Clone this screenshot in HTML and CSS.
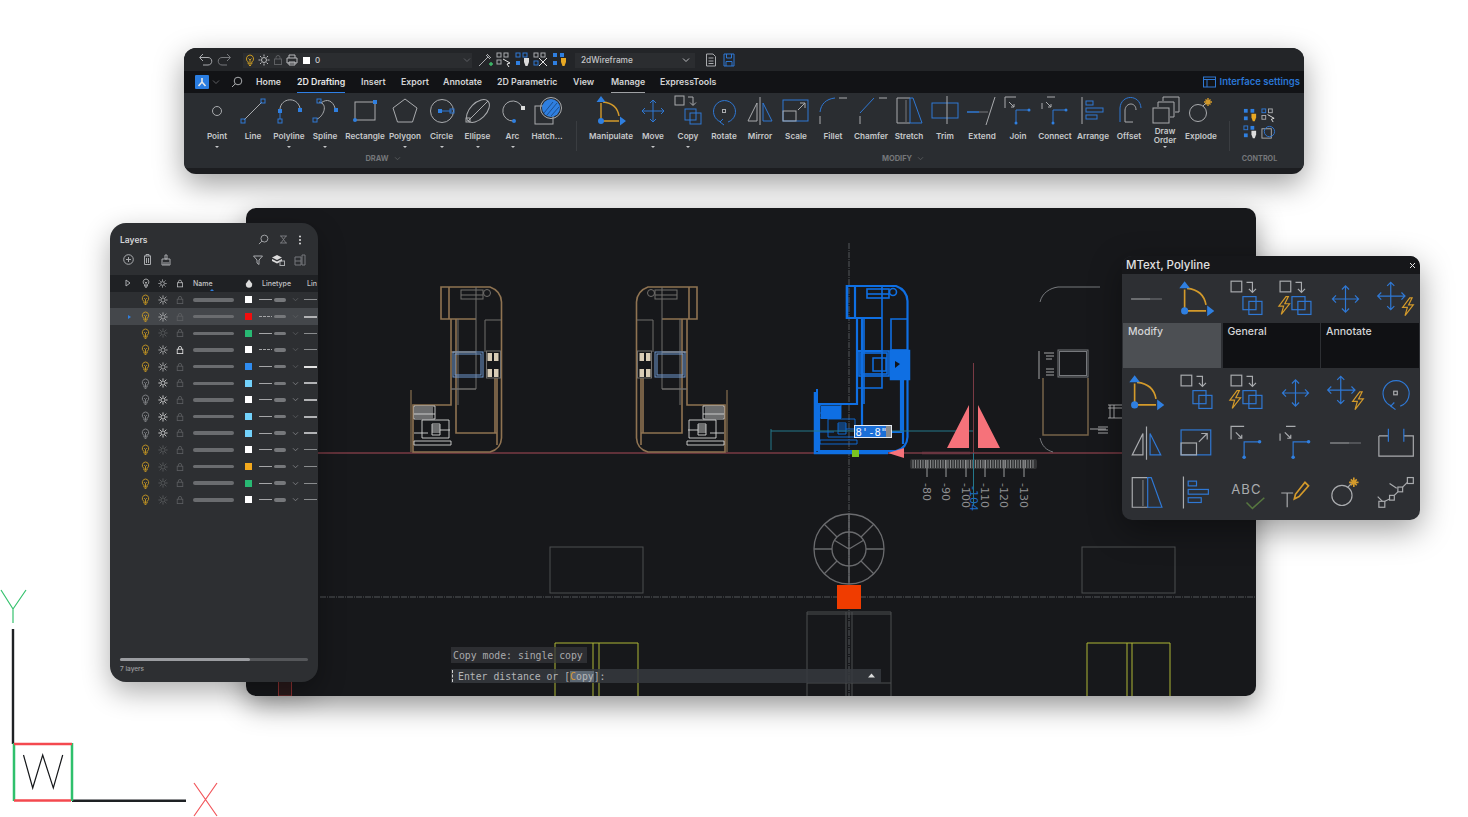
FILE: index.html
```html
<!DOCTYPE html>
<html lang="en">
<head>
<meta charset="utf-8">
<title>CAD interface</title>
<link rel="stylesheet" href="styles.css">
</head>
<body>
<svg class="sprite" aria-hidden="true">
  <defs>
    <symbol id="i-point" viewBox="0 0 36 32"><circle class="g" cx="18" cy="16" r="4.5"/></symbol>
    <symbol id="i-line" viewBox="0 0 36 32"><path class="g" d="M9 25L27 7"/><rect class="b" x="6" y="24" width="4" height="4"/><rect class="b" x="26" y="4" width="4" height="4"/></symbol>
    <symbol id="i-polyline" viewBox="0 0 36 32"><path class="g" d="M9 14C10 3 26 1 29 13"/><path class="b" d="M9 16V24"/><rect class="bf" x="7" y="14" width="4" height="4"/><rect class="b" x="7" y="24" width="4" height="4"/><rect class="bf" x="27" y="13" width="4" height="4"/></symbol>
    <symbol id="i-spline" viewBox="0 0 36 32"><path class="g" d="M12 7C22 9 16 22 10 24M14 8C20 3 26 6 28 13"/><rect class="b" x="10" y="4" width="4" height="4"/><rect class="b" x="6" y="23" width="4" height="4"/><rect class="bf" x="27" y="13" width="4" height="4"/></symbol>
    <symbol id="i-rectangle" viewBox="0 0 36 32"><rect class="g" x="8" y="7" width="20" height="18"/><circle class="bf" cx="8" cy="25" r="2"/><rect class="bf" x="26" y="5" width="4" height="4"/></symbol>
    <symbol id="i-polygon" viewBox="0 0 36 32"><path class="g" d="M18 4L30 13L25.5 27H10.5L6 13Z"/></symbol>
    <symbol id="i-circle" viewBox="0 0 36 32"><circle class="g" cx="18" cy="16" r="11.500"/><rect class="bf" x="14" y="14" width="4" height="4"/><path class="b" d="M18 16H28"/><rect class="b" x="26" y="14" width="4" height="4"/></symbol>
    <symbol id="i-ellipse" viewBox="0 0 36 32"><ellipse class="g" cx="18" cy="16" rx="14" ry="8" transform="rotate(-45 18 16)"/><path class="g" d="M8 26L28 6"/><rect class="g" x="6" y="23" width="4" height="4"/></symbol>
    <symbol id="i-arc" viewBox="0 0 36 32"><path class="g" d="M27 12A10 10 0 1 0 18 26"/><circle class="bf" cx="19" cy="26" r="2"/><rect class="wf" x="26" y="11" width="4" height="4"/></symbol>
    <symbol id="i-hatch" viewBox="0 0 36 32"><rect class="g" x="6" y="11" width="18" height="18"/><circle class="bf" cx="22" cy="13" r="9"/><circle class="g" cx="22" cy="13" r="10.500"/><path class="dk" d="M15 18L24 7M18 20L28 8M22 21L30 12"/></symbol>
    <symbol id="i-manipulate" viewBox="0 0 36 32"><path class="y th" d="M8 8V26H26M10 7C21 8 25 15 26 21"/><path class="bf" d="M8 1L12.500 7H3.500ZM33 26L27 21.500V30.500Z"/><circle class="bf" cx="8" cy="26" r="3"/></symbol>
    <symbol id="i-move" viewBox="0 0 36 32"><path class="b" d="M18 5V27M7 16H29M15 8L18 5L21 8M15 24L18 27L21 24M10 13L7 16L10 19M26 13L29 16L26 19"/></symbol>
    <symbol id="i-moveflash" viewBox="0 0 36 32"><path class="b" d="M14 2V25M3 13.500H26M11 5L14 2L17 5M11 22L14 25L17 22M6 10.500L3 13.500L6 16.500M23 10.500L26 13.500L23 16.500"/><path class="y" d="M30 15L24 23H28L26 30L33 21H29L32 15Z"/></symbol>
    <symbol id="i-copy" viewBox="0 0 36 32"><rect class="g" x="5" y="1" width="9" height="9"/><path class="g" d="M18 2H23V10M20 7.500L23 10.500L26 7.500"/><rect class="b" x="15" y="14" width="11" height="11"/><rect class="b" x="20" y="18" width="11" height="11"/></symbol>
    <symbol id="i-copyflash" viewBox="0 0 36 32"><rect class="g" x="5" y="1" width="9" height="9"/><path class="g" d="M18 2H23V10M20 7.500L23 10.500L26 7.500"/><rect class="b" x="15" y="14" width="11" height="11"/><rect class="b" x="20" y="18" width="11" height="11"/><path class="y" d="M10 14L4 22H8L6 29L13 20H9L12 14Z"/></symbol>
    <symbol id="i-rotate" viewBox="0 0 36 32"><path class="b" d="M15 27A11 11 0 1 1 22 27M17 24L14 27L18 30"/><rect class="g" x="16.500" y="14.500" width="3" height="3"/></symbol>
    <symbol id="i-mirror" viewBox="0 0 36 32"><path class="g" d="M18 2V30M15 8L6 26H15Z"/><path class="b" d="M21 8V26H30Z"/></symbol>
    <symbol id="i-scale" viewBox="0 0 36 32"><rect class="b" x="5" y="5" width="25" height="21"/><rect class="g" x="5" y="16" width="13" height="10"/><path class="g" d="M20 15L27 8M22 8H27V13"/></symbol>
    <symbol id="i-fillet" viewBox="0 0 36 32"><path class="b" d="M5 17C6 9 11 4 20 3"/><path class="g" d="M24 3H32M5 21V29"/></symbol>
    <symbol id="i-chamfer" viewBox="0 0 36 32"><path class="b" d="M7 18L21 3"/><path class="g" d="M26 3H34M7 21V29"/></symbol>
    <symbol id="i-stretch" viewBox="0 0 36 32"><path class="g" d="M19 3H6V28H19"/><path class="gd" d="M15 5V27"/><path class="b" d="M19 3H22L31 28H19Z"/></symbol>
    <symbol id="i-trim" viewBox="0 0 36 32"><rect class="b" x="5" y="8" width="26" height="15"/><path class="g" d="M20 1V29"/></symbol>
    <symbol id="i-extend" viewBox="0 0 36 32"><path class="g" d="M31 2L22 30"/><path class="b th" d="M3 17H15"/><path class="gd" d="M15 17H24"/></symbol>
    <symbol id="i-join" viewBox="0 0 36 32"><path class="g" d="M5 13V2H16M9 7L14 12M11 12H14V9"/><path class="b" d="M16 29V15H30"/><circle class="bf" cx="16" cy="28" r="1.500"/><circle class="bf" cx="29" cy="15" r="1.500"/></symbol>
    <symbol id="i-connect" viewBox="0 0 36 32"><path class="g" d="M5 8V14M10 2H18M9 7L14 12M11 12H14V9"/><path class="b" d="M16 29V15H30"/><circle class="bf" cx="16" cy="28" r="1.500"/><circle class="bf" cx="29" cy="15" r="1.500"/></symbol>
    <symbol id="i-arrange" viewBox="0 0 36 32"><path class="g" d="M7 2V29"/><rect class="b" x="11" y="6" width="7" height="4"/><rect class="b" x="11" y="13" width="17" height="4"/><rect class="b" x="11" y="20" width="11" height="4"/></symbol>
    <symbol id="i-offset" viewBox="0 0 36 32"><path class="b" d="M9 27V13C10 -1 29 -1 30 13"/><path class="g" d="M14 27V15C15 7 25 7 25 15M14 27H22"/></symbol>
    <symbol id="i-draworder" viewBox="0 0 36 32"><rect class="g" x="6" y="13" width="16" height="15"/><path class="g" d="M11 12V7H27V22H23M16 6V2H32V17H28"/></symbol>
    <symbol id="i-explode" viewBox="0 0 36 32"><circle class="g" cx="15" cy="18" r="8.500"/><path class="g" d="M20 11L23 8"/><path class="y th" d="M25 3V11M21 7H29M22.500 4.500L27.500 9.500M27.500 4.500L22.500 9.500"/></symbol>
    <symbol id="i-shortline" viewBox="0 0 36 32"><path class="g" d="M5 16H21"/><path class="gd" d="M21 16H31"/></symbol>
    <symbol id="i-bracket" viewBox="0 0 36 32"><path class="g" d="M4 10V27H33V10H25M12 10H4"/><path class="b" d="M12 4V15M25 4V15"/></symbol>
    <symbol id="i-spell" viewBox="0 0 36 32"><text class="spell" x="18" y="17" text-anchor="middle">ABC</text><path class="ok" d="M18 24L23 29L33 20"/></symbol>
    <symbol id="i-textedit" viewBox="0 0 36 32"><path class="g" d="M6 16H16M11 16V28"/><path class="y th" d="M18 17L26 7L29 10L21 19L17 21Z"/></symbol>
    <symbol id="i-array" viewBox="0 0 36 32"><rect class="g" x="4" y="23" width="5" height="5"/><rect class="g" x="13" y="18" width="4" height="4"/><rect class="g" x="20" y="11" width="4" height="4"/><rect class="g" x="28" y="3" width="5" height="5"/><path class="g" d="M9 23L13 21M17 18L20 15M24 11L28 7M13 8L19 12M3 19L7 23"/></symbol>
    <symbol id="i-bulb" viewBox="0 0 10 12"><path class="cur" d="M5 1A3.800 3.800 0 0 0 3.200 8V10H6.800V8A3.800 3.800 0 0 0 5 1ZM4 11.500H6M3.500 4.500L5 6L6.500 4.500M5 6V10"/></symbol>
    <symbol id="i-sun" viewBox="0 0 12 12"><circle class="cur" cx="6" cy="6" r="2.500"/><path class="cur" d="M6 .5V2.500M6 9.500V11.500M.5 6H2.500M9.500 6H11.500M2 2L3.500 3.500M8.500 8.500L10 10M10 2L8.500 3.500M3.500 8.500L2 10"/></symbol>
    <symbol id="i-lock" viewBox="0 0 10 12"><rect class="cur" x="1.500" y="5" width="7" height="5.500"/><path class="cur" d="M3 5V3.500A2 2 0 0 1 7 3.500V5"/></symbol>
    <symbol id="i-chev" viewBox="0 0 8 6"><path class="cur" d="M1 1.500L4 4.500L7 1.500"/></symbol>
  </defs>
</svg>

<section class="ribbon-window">
  <div class="quick-bar">
    <svg class="q-icon" width="16" height="14" viewBox="0 0 16 14"><path class="g" d="M5 1L1.500 4.500L5 8M2 4.500H10C15 4.500 15 12 10 12H5"/></svg>
    <svg class="q-icon" width="16" height="14" viewBox="0 0 16 14"><path class="gd" d="M11 1L14.500 4.500L11 8M14 4.500H6C1 4.500 1 12 6 12H11"/></svg>
    <div class="layer-select">
      <svg class="tint-y" width="10" height="12"><use href="#i-bulb"/></svg>
      <svg class="tint-m" width="12" height="12"><use href="#i-sun"/></svg>
      <svg class="tint-d" width="10" height="12"><use href="#i-lock"/></svg>
      <svg class="tint-m" width="12" height="12" viewBox="0 0 12 12"><path class="cur" d="M3 4V1H9V4M1 4H11V9H1ZM3 8H9V11H3Z"/></svg>
      <span class="swatch-big"></span>
      <span class="layer-zero">0</span>
      <svg class="tint-d chev-end" width="8" height="6"><use href="#i-chev"/></svg>
    </div>
    <div class="q-tools">
      <svg width="16" height="16" viewBox="0 0 16 16"><path class="g" d="M2 14L11 5M9 3L13 7M10 2L14 6"/><path class="okf" d="M12 12H16M14 10V14"/></svg>
      <svg width="16" height="16" viewBox="0 0 16 16"><rect class="g" x="1" y="1" width="4" height="4"/><rect class="g" x="8" y="1" width="4" height="4"/><rect class="g" x="1" y="8" width="4" height="4"/><path class="wh" d="M7 7L14 11L11 12L13 15"/></svg>
      <svg width="16" height="16" viewBox="0 0 16 16"><rect class="b" x="1" y="1" width="4" height="4"/><rect class="b" x="8" y="1" width="4" height="4"/><rect class="bf" x="1" y="9" width="4" height="4"/><path class="wf" d="M9 6H14V10L12.500 14H10.500L9 10Z"/></svg>
      <svg width="16" height="16" viewBox="0 0 16 16"><rect class="g" x="1" y="1" width="4" height="4"/><rect class="g" x="8" y="1" width="4" height="4"/><rect class="b" x="1" y="9" width="4" height="4"/><path class="wh" d="M6 6L14 14M14 6L6 14"/></svg>
      <svg width="16" height="16" viewBox="0 0 16 16"><rect class="bf" x="1" y="1" width="4" height="4"/><rect class="bf" x="8" y="1" width="4" height="4"/><rect class="bf" x="1" y="9" width="4" height="4"/><path class="yf" d="M9 6H14V10L12.500 14H10.500L9 10Z"/></svg>
    </div>
    <div class="view-select"><span>2dWireframe</span><svg class="tint-m" width="8" height="6"><use href="#i-chev"/></svg></div>
    <div class="q-docs">
      <svg width="12" height="14" viewBox="0 0 12 14"><path class="g" d="M1.500 1H8L10.500 3.500V13H1.500ZM3.500 5H8.500M3.500 8H8.500M3.500 10.500H8.500"/></svg>
      <svg width="12" height="14" viewBox="0 0 12 14"><path class="b" d="M1 1H11V13H1ZM3.500 1V5H8.500V1M3 13V8.500H9V13"/></svg>
    </div>
  </div>

  <nav class="tab-bar">
    <span class="logo"><svg width="10" height="10" viewBox="0 0 10 10"><path class="wh wide" d="M5 1V5M5 5L1.500 9M5 5L8.500 9"/></svg></span>
    <svg class="tint-d tab-chev" width="8" height="6"><use href="#i-chev"/></svg>
    <svg class="tab-search" width="12" height="12" viewBox="0 0 12 12"><circle class="g" cx="7" cy="5" r="3.800"/><path class="g" d="M4.300 7.800L1 11"/></svg>
    <a class="tab t-home">Home</a>
    <a class="tab t-active">2D Drafting</a>
    <a class="tab t-insert">Insert</a>
    <a class="tab t-export">Export</a>
    <a class="tab t-annot">Annotate</a>
    <a class="tab t-param">2D Parametric</a>
    <a class="tab t-view">View</a>
    <a class="tab t-manage">Manage</a>
    <a class="tab t-express">ExpressTools</a>
    <span class="iface">
      <svg width="13" height="12" viewBox="0 0 13 12"><rect class="b" x=".5" y="1" width="12" height="10"/><path class="b" d="M.5 3.500H12.500M4 3.500V11"/></svg>
      Interface settings
    </span>
  </nav>

  <div class="ribbon">
    <div class="group">
      <div class="tools tools-draw">
        <div class="tool"><svg class="ti"><use href="#i-point"/></svg><span class="tl">Point</span><i class="drop"></i></div>
        <div class="tool"><svg class="ti"><use href="#i-line"/></svg><span class="tl">Line</span></div>
        <div class="tool"><svg class="ti"><use href="#i-polyline"/></svg><span class="tl">Polyline</span><i class="drop"></i></div>
        <div class="tool"><svg class="ti"><use href="#i-spline"/></svg><span class="tl">Spline</span><i class="drop"></i></div>
        <div class="tool"><svg class="ti"><use href="#i-rectangle"/></svg><span class="tl">Rectangle</span></div>
        <div class="tool"><svg class="ti"><use href="#i-polygon"/></svg><span class="tl">Polygon</span><i class="drop"></i></div>
        <div class="tool"><svg class="ti"><use href="#i-circle"/></svg><span class="tl">Circle</span><i class="drop"></i></div>
        <div class="tool"><svg class="ti"><use href="#i-ellipse"/></svg><span class="tl">Ellipse</span><i class="drop"></i></div>
        <div class="tool"><svg class="ti"><use href="#i-arc"/></svg><span class="tl">Arc</span><i class="drop"></i></div>
        <div class="tool"><svg class="ti"><use href="#i-hatch"/></svg><span class="tl">Hatch...</span></div>
      </div>
      <div class="group-label label-draw">DRAW <svg class="tint-d" width="7" height="5"><use href="#i-chev"/></svg></div>
    </div>
    <div class="group group-sep">
      <div class="tools tools-modify">
        <div class="tool"><svg class="ti"><use href="#i-manipulate"/></svg><span class="tl">Manipulate</span></div>
        <div class="tool"><svg class="ti"><use href="#i-move"/></svg><span class="tl">Move</span><i class="drop"></i></div>
        <div class="tool"><svg class="ti"><use href="#i-copy"/></svg><span class="tl">Copy</span><i class="drop"></i></div>
        <div class="tool"><svg class="ti"><use href="#i-rotate"/></svg><span class="tl">Rotate</span></div>
        <div class="tool"><svg class="ti"><use href="#i-mirror"/></svg><span class="tl">Mirror</span></div>
        <div class="tool"><svg class="ti"><use href="#i-scale"/></svg><span class="tl">Scale</span></div>
        <div class="tool"><svg class="ti"><use href="#i-fillet"/></svg><span class="tl">Fillet</span></div>
        <div class="tool"><svg class="ti"><use href="#i-chamfer"/></svg><span class="tl">Chamfer</span></div>
        <div class="tool"><svg class="ti"><use href="#i-stretch"/></svg><span class="tl">Stretch</span></div>
        <div class="tool"><svg class="ti"><use href="#i-trim"/></svg><span class="tl">Trim</span></div>
        <div class="tool"><svg class="ti"><use href="#i-extend"/></svg><span class="tl">Extend</span></div>
        <div class="tool"><svg class="ti"><use href="#i-join"/></svg><span class="tl">Join</span></div>
        <div class="tool"><svg class="ti"><use href="#i-connect"/></svg><span class="tl">Connect</span></div>
        <div class="tool"><svg class="ti"><use href="#i-arrange"/></svg><span class="tl">Arrange</span></div>
        <div class="tool"><svg class="ti"><use href="#i-offset"/></svg><span class="tl">Offset</span></div>
        <div class="tool"><svg class="ti"><use href="#i-draworder"/></svg><span class="tl">Draw<br>Order</span><i class="drop"></i></div>
        <div class="tool"><svg class="ti"><use href="#i-explode"/></svg><span class="tl">Explode</span></div>
      </div>
      <div class="group-label">MODIFY <svg class="tint-d" width="7" height="5"><use href="#i-chev"/></svg></div>
    </div>
    <div class="group group-control">
      <div class="control-grid">
        <svg width="15" height="15" viewBox="0 0 16 16"><rect class="bf" x="1" y="1" width="4" height="4"/><rect class="bf" x="8" y="1" width="4" height="4"/><rect class="bf" x="1" y="9" width="4" height="4"/><path class="yf" d="M9 6H14V10L12.500 14H10.500L9 10Z"/></svg>
        <svg width="15" height="15" viewBox="0 0 16 16"><rect class="b" x="1" y="1" width="4" height="4"/><rect class="g" x="8" y="1" width="4" height="4"/><rect class="g" x="1" y="8" width="4" height="4"/><path class="wh" d="M7 7L14 11L11 12L13 15"/></svg>
        <svg width="15" height="15" viewBox="0 0 16 16"><rect class="b" x="1" y="1" width="4" height="4"/><rect class="bf" x="8" y="1" width="4" height="4"/><rect class="bf" x="1" y="9" width="4" height="4"/><path class="wf" d="M9 6H14V10L12.500 14H10.500L9 10Z"/></svg>
        <svg width="15" height="15" viewBox="0 0 16 16"><rect class="g" x="1" y="4" width="10" height="10"/><circle class="b" cx="9" cy="7" r="5.500"/></svg>
      </div>
      <div class="group-label label-control">CONTROL</div>
    </div>
  </div>
</section>

<main class="canvas">
  <svg class="drawing" viewBox="246 208 1010 488" width="1010" height="488">
    <defs>
      <g id="unit">
        <path class="u-a" d="M441 287H490Q501 291 501.500 302V438Q501 449 490 452H413V405H451V319H441ZM456 319V433H497M497 378V445M441 319H476M449 287V319M451 352H476M495 378V433"/>
        <path class="u-p" d="M411 390V452"/>
        <path class="u-b" d="M476 287V389H451M458 319V405M451 389H476M485 352V320H501"/>
        <rect class="u-b" x="461" y="290" width="22" height="9"/>
        <path class="u-b" d="M461 295H483"/>
        <circle class="u-b" cx="487" cy="293" r="3.500"/>
        <rect class="u-c" x="453" y="352" width="30" height="25"/>
        <rect class="u-c" x="455" y="354" width="26" height="21"/>
        <rect class="u-b" x="486.500" y="351" width="14" height="27"/>
        <rect class="u-d" x="487.500" y="353" width="4.500" height="8"/>
        <rect class="u-d" x="494" y="353" width="4.500" height="8"/>
        <rect class="u-d" x="487.500" y="369" width="4.500" height="8"/>
        <rect class="u-d" x="494" y="369" width="4.500" height="8"/>
        <path class="u-e" d="M414 406H435V419H414ZM422 420H449V438H422ZM414 441H451V445H414ZM414 433H428M432 424H440V435H432ZM440 430H450M416 407V418M418 407V418M420 407V418M422 407V418M424 407V418M426 407V418M428 407V418M430 407V418M432 407V418M414 414H435M432 426H440M432 428H440M432 430H440M432 432H440"/>
      </g>
    </defs>

    <path class="axis-red" d="M318 453H1122"/>
    <path class="axis-dash" d="M849 243V696M320 597H1256"/>

    <use href="#unit" class="unit-tan"/>
    <use href="#unit" class="unit-tan" transform="translate(1138 0) scale(-1 1)"/>
    <use href="#unit" class="unit-blue" transform="translate(406 -1)"/>
    <path class="blue-thick" d="M815 392V453H888M847 285V319M891 351H909V379H891Z"/>
    <rect class="blue-fill" x="892" y="351" width="16" height="27"/>
    <path class="notch" d="M895 361L900 364L895 368Z"/>
    <rect class="blue-inner" x="873" y="358" width="13" height="13"/>
    <rect class="blue-fill" x="821" y="406" width="20" height="13"/>

    <path class="far-g" d="M1040 302C1042 293 1050 288 1058 287M1058 287H1100M1040 438C1042 446 1046 450 1053 452"/>
    <rect class="far-g" x="1058" y="350" width="30" height="27"/>
    <rect class="far-g" x="1059.500" y="351.500" width="27" height="24"/>
    <path class="far-b" d="M1043 378V435H1088V378"/>
    <path class="far-w" d="M1039 351V379M1044 353H1054M1046 356H1054M1046 359H1052M1046 369H1054M1046 372H1054M1046 375H1054M1108 405H1122M1108 408H1122M1110 405V418M1114 405V418M1108 418H1122M1090 429H1106M1098 427H1108M1098 430H1108M1098 433H1108"/>

    <rect class="ruler-band" x="910" y="459" width="127" height="10" rx="2"/>
    <path class="ruler-ticks" d="M913 460V468M915.500 460V468M918 460V468M920.500 460V468M923 460V468M925.500 460V468M928 460V468M930.500 460V468M933 460V468M935.500 460V468M938 460V468M940.500 460V468M943 460V468M945.500 460V468M948 460V468M950.500 460V468M953 460V468M955.500 460V468M958 460V468M960.500 460V468M963 460V468M965.500 460V468M968 460V468M970.500 460V468M973 460V468M975.500 460V468M978 460V468M980.500 460V468M983 460V468M985.500 460V468M988 460V468M990.500 460V468M993 460V468M995.500 460V468M998 460V468M1000.500 460V468M1003 460V468M1005.500 460V468M1008 460V468M1010.500 460V468M1013 460V468M1015.500 460V468M1018 460V468M1020.500 460V468M1023 460V468M1025.500 460V468M1028 460V468M1030.500 460V468M1033 460V468"/>
    <path class="ruler-major" d="M927 460V477M946 460V477M966 460V477M985 460V477M1004 460V477M1024 460V477"/>
    <text class="rt" transform="translate(923 483) rotate(90)">-80</text>
    <text class="rt" transform="translate(942 483) rotate(90)">-90</text>
    <text class="rt" transform="translate(962 483) rotate(90)">-100</text>
    <text class="rt" transform="translate(981 483) rotate(90)">-110</text>
    <text class="rt" transform="translate(1000 483) rotate(90)">-120</text>
    <text class="rt" transform="translate(1020 483) rotate(90)">-130</text>
    <text class="rt rt-b" transform="translate(970 486) rotate(90)">-104</text>

    <path class="teal" d="M771 431H974M771 429V450M973.500 453V505"/>
    <path class="cursor-v" d="M973.500 363V453"/>
    <path class="tri" d="M969 405V448H947ZM978 405V448H1000ZM888 453L904 448V458Z"/>
    <path class="axis-dark" d="M922 453H970"/>
    <rect class="grip" x="852" y="450" width="7" height="7"/>
    <rect class="dim-box" x="854.500" y="425.500" width="37" height="12"/>
    <rect class="dim-end" x="886" y="426" width="5" height="11"/>
    <text class="dim-text" x="855.500" y="435.500">8'-8"</text>

    <rect class="gray-rect" x="550" y="547" width="93" height="46"/>
    <rect class="gray-rect" x="1082" y="547" width="93" height="46"/>
    <g class="wheel">
      <circle cx="849" cy="549" r="35"/>
      <circle cx="849" cy="549" r="17"/>
      <path d="M849 514V584M849 549L834 540M849 549L864 540M814 549H832M866 549H884M824 524L837 537M874 524L861 537M824 574L837 561M874 574L861 561"/>
    </g>
    <rect class="orange" x="837" y="585" width="24" height="24"/>
    <path class="gray-rect" d="M807 696V612H891V696M807 683H891M846 612V696M852 612V696M807 614H891"/>
    <path class="olive" d="M555 696V643H638V696M593 643V696M599 643V696M1087 696V643H1170V696M1127 643V696M1132 643V696"/>
    <rect class="stub" x="278.500" y="680" width="13" height="16"/>
  </svg>

  <div class="cmd cmd-history">Copy mode: single copy</div>
  <div class="cmd cmd-input">
    <span class="cmd-grip"></span><span>Enter distance or [<span class="cmd-hl"><span class="cmd-key">C</span>opy</span>]:</span>
    <svg class="cmd-up" width="7" height="5" viewBox="0 0 7 5"><path class="wf" d="M3.500 .5L7 4.500H0Z"/></svg>
  </div>
</main>

<aside class="layers">
  <header class="layers-head">
    <span>Layers</span>
    <span class="head-tools">
      <svg width="11" height="11" viewBox="0 0 12 12"><circle class="g" cx="7" cy="5" r="3.800"/><path class="g" d="M4.300 7.800L1 11"/></svg>
      <svg width="9" height="9" viewBox="0 0 9 9"><path class="gd" d="M2 1L7 8M7 1L2 8M1 1H8M1 8H8"/></svg>
      <svg width="4" height="10" viewBox="0 0 4 10"><circle class="wf" cx="2" cy="1.500" r="1"/><circle class="wf" cx="2" cy="5" r="1"/><circle class="wf" cx="2" cy="8.500" r="1"/></svg>
    </span>
  </header>
  <div class="layers-tools">
    <svg width="11" height="11" viewBox="0 0 11 11"><circle class="g" cx="5.500" cy="5.500" r="4.800"/><path class="g" d="M5.500 3V8M3 5.500H8"/></svg>
    <svg width="9" height="11" viewBox="0 0 9 11"><path class="g" d="M1 2H8M3 2V.5H6V2M1.500 2V10.500H7.500V2M3.500 4V9M5.500 4V9"/></svg>
    <svg width="10" height="12" viewBox="0 0 10 12"><path class="g" d="M4 1H6V5H4ZM1 5H9V11H1ZM3 8V11M5 8V11M7 8V11"/></svg>
    <span class="lt-gap"></span>
    <svg width="10" height="10" viewBox="0 0 10 10"><path class="g" d="M.5 1H9.500L6 5V9.500L4 8V5Z"/></svg>
    <svg width="13" height="12" viewBox="0 0 13 12"><path class="wf" d="M5 1L10 3.500L5 6L0 3.500ZM5 7.500L10 5V7L5 9.500L0 7V5Z"/><rect class="g" x="8" y="7" width="4.500" height="4.500"/></svg>
    <svg width="12" height="12" viewBox="0 0 12 12"><path class="gd" d="M1 3H7V11H1ZM8 1H11V11H8ZM1 7H7"/></svg>
  </div>

  <div class="layer-row layer-header">
    <span class="c-caret"><svg width="6" height="8" viewBox="0 0 6 8"><path class="g" d="M1 1L5 4L1 7Z"/></svg></span>
    <span class="c-ic tint-l"><svg width="8" height="10"><use href="#i-bulb"/></svg></span>
    <span class="c-ic tint-l"><svg width="9" height="9"><use href="#i-sun"/></svg></span>
    <span class="c-ic tint-l"><svg width="8" height="9"><use href="#i-lock"/></svg></span>
    <span class="c-name-h">Name<i class="sort"></i></span>
    <span class="c-ic"><svg width="8" height="9" viewBox="0 0 8 9"><path class="wf" d="M4 .5L7 4.500A3.200 3.200 0 1 1 1 4.500Z"/></svg></span>
    <span class="c-type-h">Linetype</span>
    <span class="c-lin-h">Lin</span>
  </div>

  <div class="layer-row"><span class="c-caret"></span><span class="c-ic tint-y"><svg width="9" height="11"><use href="#i-bulb"/></svg></span><span class="c-ic tint-m"><svg width="10" height="10"><use href="#i-sun"/></svg></span><span class="c-ic tint-d"><svg width="8" height="10"><use href="#i-lock"/></svg></span><span class="c-name"><i class="bar"></i></span><span class="c-ic"><i class="sw sw-white"></i></span><span class="c-type"><i class="ln"></i><i class="pill"></i></span><span class="c-ic tint-d"><svg width="7" height="5"><use href="#i-chev"/></svg></span><span class="c-w"><i class="wt"></i></span></div>
  <div class="layer-row row-on"><span class="c-caret"><i class="cur-tri"></i></span><span class="c-ic tint-y"><svg width="9" height="11"><use href="#i-bulb"/></svg></span><span class="c-ic tint-m"><svg width="10" height="10"><use href="#i-sun"/></svg></span><span class="c-ic tint-d"><svg width="8" height="10"><use href="#i-lock"/></svg></span><span class="c-name"><i class="bar"></i></span><span class="c-ic"><i class="sw sw-red"></i></span><span class="c-type"><i class="ln ln-dash"></i><i class="pill"></i></span><span class="c-ic tint-d"><svg width="7" height="5"><use href="#i-chev"/></svg></span><span class="c-w"><i class="wt wt-b"></i></span></div>
  <div class="layer-row"><span class="c-caret"></span><span class="c-ic tint-y"><svg width="9" height="11"><use href="#i-bulb"/></svg></span><span class="c-ic tint-d"><svg width="10" height="10"><use href="#i-sun"/></svg></span><span class="c-ic tint-d"><svg width="8" height="10"><use href="#i-lock"/></svg></span><span class="c-name"><i class="bar"></i></span><span class="c-ic"><i class="sw sw-green"></i></span><span class="c-type"><i class="ln"></i><i class="pill"></i></span><span class="c-ic tint-d"><svg width="7" height="5"><use href="#i-chev"/></svg></span><span class="c-w"><i class="wt"></i></span></div>
  <div class="layer-row"><span class="c-caret"></span><span class="c-ic tint-y"><svg width="9" height="11"><use href="#i-bulb"/></svg></span><span class="c-ic tint-m"><svg width="10" height="10"><use href="#i-sun"/></svg></span><span class="c-ic tint-w"><svg width="8" height="10"><use href="#i-lock"/></svg></span><span class="c-name"><i class="bar"></i></span><span class="c-ic"><i class="sw sw-white"></i></span><span class="c-type"><i class="ln ln-dash"></i><i class="pill"></i></span><span class="c-ic tint-d"><svg width="7" height="5"><use href="#i-chev"/></svg></span><span class="c-w"><i class="wt"></i></span></div>
  <div class="layer-row"><span class="c-caret"></span><span class="c-ic tint-y"><svg width="9" height="11"><use href="#i-bulb"/></svg></span><span class="c-ic tint-m"><svg width="10" height="10"><use href="#i-sun"/></svg></span><span class="c-ic tint-d"><svg width="8" height="10"><use href="#i-lock"/></svg></span><span class="c-name"><i class="bar"></i></span><span class="c-ic"><i class="sw sw-blue"></i></span><span class="c-type"><i class="ln"></i><i class="pill"></i></span><span class="c-ic tint-d"><svg width="7" height="5"><use href="#i-chev"/></svg></span><span class="c-w"><i class="wt wt-bb"></i></span></div>
  <div class="layer-row"><span class="c-caret"></span><span class="c-ic tint-g"><svg width="9" height="11"><use href="#i-bulb"/></svg></span><span class="c-ic tint-w"><svg width="10" height="10"><use href="#i-sun"/></svg></span><span class="c-ic tint-d"><svg width="8" height="10"><use href="#i-lock"/></svg></span><span class="c-name"><i class="bar"></i></span><span class="c-ic"><i class="sw sw-sky"></i></span><span class="c-type"><i class="ln"></i><i class="pill"></i></span><span class="c-ic tint-g"><svg width="7" height="5"><use href="#i-chev"/></svg></span><span class="c-w"><i class="wt wt-b"></i></span></div>
  <div class="layer-row"><span class="c-caret"></span><span class="c-ic tint-g"><svg width="9" height="11"><use href="#i-bulb"/></svg></span><span class="c-ic tint-w"><svg width="10" height="10"><use href="#i-sun"/></svg></span><span class="c-ic tint-d"><svg width="8" height="10"><use href="#i-lock"/></svg></span><span class="c-name"><i class="bar"></i></span><span class="c-ic"><i class="sw sw-white"></i></span><span class="c-type"><i class="ln"></i><i class="pill"></i></span><span class="c-ic tint-g"><svg width="7" height="5"><use href="#i-chev"/></svg></span><span class="c-w"><i class="wt wt-b"></i></span></div>
  <div class="layer-row"><span class="c-caret"></span><span class="c-ic tint-g"><svg width="9" height="11"><use href="#i-bulb"/></svg></span><span class="c-ic tint-w"><svg width="10" height="10"><use href="#i-sun"/></svg></span><span class="c-ic tint-d"><svg width="8" height="10"><use href="#i-lock"/></svg></span><span class="c-name"><i class="bar"></i></span><span class="c-ic"><i class="sw sw-sky"></i></span><span class="c-type"><i class="ln"></i><i class="pill"></i></span><span class="c-ic tint-d"><svg width="7" height="5"><use href="#i-chev"/></svg></span><span class="c-w"><i class="wt wt-b"></i></span></div>
  <div class="layer-row"><span class="c-caret"></span><span class="c-ic tint-g"><svg width="9" height="11"><use href="#i-bulb"/></svg></span><span class="c-ic tint-w"><svg width="10" height="10"><use href="#i-sun"/></svg></span><span class="c-ic tint-d"><svg width="8" height="10"><use href="#i-lock"/></svg></span><span class="c-name"><i class="bar"></i></span><span class="c-ic"><i class="sw sw-sky"></i></span><span class="c-type"><i class="ln"></i><i class="pill"></i></span><span class="c-ic tint-g"><svg width="7" height="5"><use href="#i-chev"/></svg></span><span class="c-w"><i class="wt wt-b"></i></span></div>
  <div class="layer-row"><span class="c-caret"></span><span class="c-ic tint-y"><svg width="9" height="11"><use href="#i-bulb"/></svg></span><span class="c-ic tint-d"><svg width="10" height="10"><use href="#i-sun"/></svg></span><span class="c-ic tint-d"><svg width="8" height="10"><use href="#i-lock"/></svg></span><span class="c-name"><i class="bar"></i></span><span class="c-ic"><i class="sw sw-white"></i></span><span class="c-type"><i class="ln"></i><i class="pill"></i></span><span class="c-ic tint-g"><svg width="7" height="5"><use href="#i-chev"/></svg></span><span class="c-w"><i class="wt"></i></span></div>
  <div class="layer-row"><span class="c-caret"></span><span class="c-ic tint-y"><svg width="9" height="11"><use href="#i-bulb"/></svg></span><span class="c-ic tint-d"><svg width="10" height="10"><use href="#i-sun"/></svg></span><span class="c-ic tint-d"><svg width="8" height="10"><use href="#i-lock"/></svg></span><span class="c-name"><i class="bar"></i></span><span class="c-ic"><i class="sw sw-orange"></i></span><span class="c-type"><i class="ln"></i><i class="pill"></i></span><span class="c-ic tint-g"><svg width="7" height="5"><use href="#i-chev"/></svg></span><span class="c-w"><i class="wt"></i></span></div>
  <div class="layer-row"><span class="c-caret"></span><span class="c-ic tint-y"><svg width="9" height="11"><use href="#i-bulb"/></svg></span><span class="c-ic tint-d"><svg width="10" height="10"><use href="#i-sun"/></svg></span><span class="c-ic tint-d"><svg width="8" height="10"><use href="#i-lock"/></svg></span><span class="c-name"><i class="bar"></i></span><span class="c-ic"><i class="sw sw-green"></i></span><span class="c-type"><i class="ln"></i><i class="pill"></i></span><span class="c-ic tint-g"><svg width="7" height="5"><use href="#i-chev"/></svg></span><span class="c-w"><i class="wt"></i></span></div>
  <div class="layer-row"><span class="c-caret"></span><span class="c-ic tint-y"><svg width="9" height="11"><use href="#i-bulb"/></svg></span><span class="c-ic tint-d"><svg width="10" height="10"><use href="#i-sun"/></svg></span><span class="c-ic tint-d"><svg width="8" height="10"><use href="#i-lock"/></svg></span><span class="c-name"><i class="bar"></i></span><span class="c-ic"><i class="sw sw-white"></i></span><span class="c-type"><i class="ln"></i><i class="pill"></i></span><span class="c-ic tint-g"><svg width="7" height="5"><use href="#i-chev"/></svg></span><span class="c-w"><i class="wt"></i></span></div>

  <footer class="layers-foot">
    <div class="scroll"><i class="scroll-thumb"></i></div>
    <span>7 layers</span>
  </footer>
</aside>

<aside class="palette">
  <header class="pal-head"><span>MText, Polyline</span><svg width="7" height="7" viewBox="0 0 7 7"><path class="wh" d="M1 1L6 6M6 1L1 6"/></svg></header>
  <div class="pal-row">
    <svg class="pi"><use href="#i-shortline"/></svg>
    <svg class="pi"><use href="#i-manipulate"/></svg>
    <svg class="pi"><use href="#i-copy"/></svg>
    <svg class="pi"><use href="#i-copyflash"/></svg>
    <svg class="pi"><use href="#i-move"/></svg>
    <svg class="pi"><use href="#i-moveflash"/></svg>
  </div>
  <div class="pal-tabs">
    <div class="pal-tab pal-tab-on">Modify</div>
    <div class="pal-tab">General</div>
    <div class="pal-tab">Annotate</div>
  </div>
  <div class="pal-grid">
    <svg class="pi"><use href="#i-manipulate"/></svg>
    <svg class="pi"><use href="#i-copy"/></svg>
    <svg class="pi"><use href="#i-copyflash"/></svg>
    <svg class="pi"><use href="#i-move"/></svg>
    <svg class="pi"><use href="#i-moveflash"/></svg>
    <svg class="pi"><use href="#i-rotate"/></svg>
    <svg class="pi"><use href="#i-mirror"/></svg>
    <svg class="pi"><use href="#i-scale"/></svg>
    <svg class="pi"><use href="#i-join"/></svg>
    <svg class="pi"><use href="#i-connect"/></svg>
    <svg class="pi"><use href="#i-shortline"/></svg>
    <svg class="pi"><use href="#i-bracket"/></svg>
    <svg class="pi"><use href="#i-stretch"/></svg>
    <svg class="pi"><use href="#i-arrange"/></svg>
    <svg class="pi"><use href="#i-spell"/></svg>
    <svg class="pi"><use href="#i-textedit"/></svg>
    <svg class="pi"><use href="#i-explode"/></svg>
    <svg class="pi"><use href="#i-array"/></svg>
  </div>
</aside>

<svg class="ucs" width="220" height="230" viewBox="0 587 220 230">
  <path class="ucs-green" d="M1 590L13 609L26 590M13 609V623"/>
  <path class="ucs-black" d="M13 629V744M72 800.700H186"/>
  <path class="ucs-w" d="M23.500 755L32.700 788L42.700 755L53.300 788L62.700 755"/>
  <path class="ucs-side" d="M14 743V801M72 743V801"/>
  <path class="ucs-top" d="M14 744H72M14 800.500H71"/>
  <path class="ucs-x" d="M194 783L217 816M217 783L194 816"/>
</svg>
</body>
</html>
```

FILE: styles.css
```css
* { box-sizing: border-box; }

html, body {
  margin: 0;
  width: 1468px;
  height: 817px;
  overflow: hidden;
  background: #fff;
  font-family: Inter, "Liberation Sans", sans-serif;
}

.sprite { position: absolute; width: 0; height: 0; }

/* shared strokes */
svg { overflow: visible; flex-shrink: 0; display: block; }
.g, .gd, .b, .y, .wh, .dk, .ok, .okf, .cur { fill: none; stroke-width: 1; }
.g { stroke: #a9abae; }
.gd { stroke: #77797c; }
.b { stroke: #2f78d4; }
.y { stroke: #d39a2b; }
.th { stroke-width: 1.4; }
.wh { stroke: #e6e6e6; }
.wide { stroke-width: 1.6; }
.dk { stroke: #1d4f8f; }
.ok { stroke: #56763f; stroke-width: 1.3; }
.okf { stroke: #3fbf6b; stroke-width: 1.4; }
.bf { fill: #2f7fe0; stroke: none; }
.wf { fill: #dcdcdc; stroke: none; }
.yf { fill: #e7a824; stroke: none; }
.cur { stroke: currentColor; }
.spell { font: 11px Inter, sans-serif; letter-spacing: 1px; fill: #a9abae; }

.tint-y { color: #c99a22; }
.tint-m { color: #b9babc; }
.tint-g { color: #85878a; }
.tint-d { color: #5d5f62; }
.tint-w { color: #e9e9e9; }
.tint-l { color: #c4c5c7; }

/* ribbon window */
.ribbon-window {
  position: absolute;
  left: 184px;
  top: 48px;
  width: 1120px;
  height: 126px;
  border-radius: 12px;
  overflow: hidden;
  background: #1c1d20;
  box-shadow: 0 10px 30px rgba(0, 0, 0, .38);
  display: flex;
  flex-direction: column;
}

.quick-bar {
  height: 23px;
  flex: none;
  display: flex;
  align-items: center;
  padding: 1px 0 0 14px;
  background: #232528;
}
.q-icon { margin-right: 2px; }
.layer-select {
  width: 229px;
  height: 15px;
  margin-left: 9px;
  padding-left: 2px;
  display: flex;
  align-items: center;
  gap: 3px;
  background: #2b2d30;
}
.swatch-big { width: 7px; height: 7px; background: #fff; margin-left: 2px; }
.layer-zero { font-size: 8px; color: #c9cacc; margin-left: 2px; font-weight: 500; }
.chev-end { margin-left: auto; margin-right: 1px; }
.q-tools { display: flex; gap: 2.750px; margin-left: 5px; width: 100px; }
.view-select {
  width: 120px;
  height: 15px;
  margin-left: -2px;
  padding: 0 5px 0 6px;
  display: flex;
  align-items: center;
  justify-content: space-between;
  background: #2b2d30;
  font-size: 8.300px;
  font-weight: 500;
  color: #c4c5c7;
}
.q-docs { display: flex; gap: 6px; margin-left: 10px; }

.tab-bar {
  position: relative;
  height: 22px;
  flex: none;
  display: flex;
  align-items: center;
  background: #121316;
  padding-left: 11px;
}
.logo {
  width: 14px;
  height: 14px;
  flex: none;
  display: flex;
  align-items: center;
  justify-content: center;
  background: #2a7de1;
  border-radius: 1px;
}
.tab-chev { margin-left: 3px; }
.tab-search { margin-left: 11px; margin-right: 13px; }
.tab {
  height: 22px;
  line-height: 21px;
  font-size: 8.800px;
  font-weight: 600;
  color: #d2d3d5;
  white-space: nowrap;
}
.t-home { width: 41px; }
.t-active { width: 48px; margin-right: 16px; color: #e8e8e8; border-bottom: 1px solid #2f80e6; }
.t-insert { width: 40px; }
.t-export { width: 42px; }
.t-annot { width: 54px; }
.t-param { width: 76px; }
.t-view { width: 38px; }
.t-manage { width: 34px; margin-right: 15px; border-bottom: 1px solid #9fa1a4; }
.t-express { width: 60px; }
.iface {
  position: absolute;
  right: 4px;
  top: 0;
  height: 21px;
  display: flex;
  align-items: center;
  gap: 4px;
  font-size: 9.500px;
  font-weight: 600;
  color: #2a76d4;
  white-space: nowrap;
}

.ribbon {
  height: 75px;
  flex: none;
  display: flex;
  padding-left: 15px;
  background: #2a2d31;
}
.group { display: flex; flex-direction: column; }
.group-sep { margin-left: 25px; position: relative; }
.group-sep::before, .group-control::before {
  content: "";
  position: absolute;
  left: -13px;
  top: 28px;
  height: 30px;
  width: 1px;
  background: #3a3d41;
}
.tools { display: grid; height: 58px; padding-top: 2px; }
.tools-draw { grid-template-columns: 36px 36px 36px 36px 44px 36px 37px 35px 35px 34px; }
.tools-modify { grid-template-columns: 44px 40px 30px 42px 30px 42px 32px 44px 32px 40px 34px 38px 36px 40px 32px 40px 32px; }
.tool {
  display: flex;
  flex-direction: column;
  align-items: center;
  min-width: 0;
}
.ti { width: 36px; height: 32px; }
.tl {
  display: flex;
  height: 18px;
  align-items: center;
  text-align: center;
  font-size: 8.200px;
  line-height: 9px;
  font-weight: 600;
  color: #c6c8ca;
  white-space: nowrap;
}
.drop {
  width: 0;
  height: 0;
  margin-top: 1px;
  border-left: 2px solid transparent;
  border-right: 2px solid transparent;
  border-top: 2.500px solid #c6c8ca;
}
.group-label {
  display: flex;
  justify-content: center;
  align-items: center;
  gap: 5px;
  height: 14px;
  font-size: 7.500px;
  font-weight: 700;
  color: #75777a;
}
.label-draw { padding-left: 3px; }
.group-control { position: relative; margin-left: 25px; width: 35px; }
.control-grid {
  display: grid;
  grid-template-columns: 15px 15px;
  gap: 2px 3px;
  height: 58px;
  padding: 15px 0 0 1px;
  align-content: start;
}
.label-control { justify-content: center; font-size: 7.200px; }

/* model space */
.canvas {
  position: absolute;
  left: 246px;
  top: 208px;
  width: 1010px;
  height: 488px;
  border-radius: 10px;
  overflow: hidden;
  background: #17181b;
  box-shadow: 0 10px 28px rgba(0, 0, 0, .42);
}
.drawing { position: absolute; left: 0; top: 0; overflow: hidden; }
.drawing path, .drawing rect, .drawing circle { fill: none; stroke-width: 1; }

.unit-tan { --a: #8f7352; --b: #716f6c; --c: #7099d2; --d: #d8ccb6; --e: #d6d6d6; --p: #5a4c3a; --w: 1.600; --bw: 1; }
.unit-blue { --a: #0f6fe3; --b: #0f6fe3; --c: #0f6fe3; --d: #0f6fe3; --e: #0f6fe3; --p: #0f6fe3; --w: 2.200; --bw: 1.600; }
.drawing .u-a { stroke: var(--a); stroke-width: var(--w); }
.drawing .u-b { stroke: var(--b); stroke-width: var(--bw); }
.drawing .u-c { stroke: var(--c); stroke-width: var(--bw); }
.drawing .u-d { fill: var(--d); }
.drawing .u-e { stroke: var(--e); stroke-width: .9; }
.drawing .u-p { stroke: var(--p); stroke-width: 2; }

.drawing .blue-thick { stroke: #0f6fe3; stroke-width: 2.500; }
.drawing .blue-fill { fill: #0f6fe3; }
.drawing .blue-inner { stroke: #0f6fe3; stroke-width: 1.500; }
.drawing .notch { fill: #10141c; }
.drawing .axis-red { stroke: #7a3a44; stroke-width: 1.500; }
.drawing .axis-dark { stroke: #6a3540; stroke-width: 2.500; }
.drawing .axis-dash { stroke: #55565a; stroke-dasharray: 6 1 1 1; }
.drawing .far-g { stroke: #77797d; }
.drawing .far-b { stroke: #77634a; stroke-width: 1.500; }
.drawing .far-w { stroke: #c9c9c9; stroke-width: .8; }
.drawing .ruler-band { fill: #323335; }
.drawing .ruler-ticks { stroke: #8d8e90; stroke-width: .9; }
.drawing .ruler-major { stroke: #9a9b9d; }
.rt { font: 11px "DejaVu Sans", sans-serif; fill: #8f9092; }
.rt-b { fill: #1d6cc9; }
.drawing .teal { stroke: #24788c; }
.drawing .cursor-v { stroke: #7a3a44; }
.drawing .tri { fill: #f6727a; }
.drawing .grip { fill: #79c320; }
.drawing .dim-box { fill: #1b6fd8; stroke: #e4eaf2; }
.drawing .dim-end { fill: #8a8b8d; }
.dim-text { font: 10.500px "DejaVu Sans Mono", monospace; fill: #f1f5fa; }
.drawing .gray-rect { stroke: #4d4e51; }
.drawing .wheel circle, .drawing .wheel path { stroke: #6a6b6e; stroke-width: 1.300; }
.drawing .orange { fill: #f03c00; }
.drawing .olive { stroke: #aeb636; }
.drawing .stub { fill: #2a1a1b; stroke: #8a3030; }

.cmd {
  position: absolute;
  left: 205px;
  display: flex;
  align-items: center;
  font: 9.800px "DejaVu Sans Mono", monospace;
  color: #a9aaac;
  background: rgba(54, 56, 59, .72);
  white-space: pre;
}
.cmd-history { top: 439px; width: 136px; height: 16px; padding-left: 2px; }
.cmd-input { top: 461px; width: 430px; height: 14px; background: rgba(54, 58, 62, .85); color: #b4b5b7; }
.cmd-grip { width: 1px; height: 12px; margin: 0 5px 0 1px; border-left: 1px dashed #d0d0d0; }
.cmd-hl { background: #5d6873; }
.cmd-key { color: #d59a35; }
.cmd-up { position: absolute; right: 6px; top: 4px; }

/* layers */
.layers {
  position: absolute;
  left: 110px;
  top: 223px;
  width: 208px;
  height: 459px;
  border-radius: 16px;
  overflow: hidden;
  background: #2d2f32;
  box-shadow: 0 10px 28px rgba(0, 0, 0, .32);
  display: flex;
  flex-direction: column;
}
.layers-head {
  height: 27px;
  flex: none;
  display: flex;
  align-items: center;
  justify-content: space-between;
  padding: 6px 16px 0 10px;
  font-size: 8.500px;
  font-weight: 600;
  color: #d5d6d8;
}
.head-tools { display: flex; align-items: center; gap: 10px; }
.layers-tools {
  height: 25px;
  flex: none;
  display: flex;
  align-items: center;
  gap: 9px;
  padding: 0 12px 6px 13px;
}
.lt-gap { flex: 1; }
.layer-row {
  height: 16.670px;
  flex: none;
  display: grid;
  grid-template-columns: 27px 17px 17px 17px 52px 17px 31px 15px 15px;
  align-items: center;
  justify-items: center;
}
.layer-header {
  background: #1f2124;
  font-size: 7px;
  font-weight: 500;
  color: #c3c4c6;
  grid-template-columns: 27px 17px 17px 17px 52px 17px 46px 15px;
}
.row-on { background: #44474b; }
.c-caret { width: 100%; display: flex; justify-content: flex-end; padding-right: 6px; }
.c-ic { display: flex; align-items: center; justify-content: center; }
.c-name-h { position: relative; justify-self: start; padding-left: 5px; }
.sort {
  position: absolute;
  left: 22px;
  top: 10px;
  border-left: 2px solid transparent;
  border-right: 2px solid transparent;
  border-bottom: 2.500px solid #2f7fe0;
}
.c-type-h { justify-self: start; padding-left: 5px; }
.c-lin-h { justify-self: start; padding-left: 4px; }
.c-name { width: 100%; padding-left: 5px; }
.bar { display: block; width: 41px; height: 3.500px; border-radius: 2px; background: #6a6c6f; }
.sw { display: block; width: 7px; height: 7px; }
.sw-white { background: #fff; }
.sw-red { background: #f20d0d; }
.sw-green { background: #28b973; }
.sw-blue { background: #2f8cf0; }
.sw-sky { background: #73d2fb; }
.sw-orange { background: #f3a91d; }
.c-type { display: flex; align-items: center; gap: 2px; width: 100%; padding-left: 2px; }
.ln { display: block; width: 13px; height: 1px; background: #a5a6a8; }
.ln-dash { background: repeating-linear-gradient(90deg, #a5a6a8 0 3px, transparent 3px 4px); }
.pill { display: block; width: 12px; height: 3.500px; border-radius: 2px; background: #76787b; }
.c-w { width: 100%; padding-left: 1px; }
.wt { display: block; width: 13px; height: 1px; background: #8a8c8e; }
.wt-b { height: 2px; background: #b2b3b5; }
.wt-bb { height: 2px; background: #e2e2e2; }
.cur-tri {
  display: block;
  border-top: 2.500px solid transparent;
  border-bottom: 2.500px solid transparent;
  border-left: 3px solid #2f7fe0;
}
.layers-foot {
  margin-top: auto;
  height: 24px;
  padding: 0 10px;
  font-size: 6.500px;
  font-weight: 500;
  color: #9c9d9f;
}
.scroll { height: 3px; border-radius: 2px; background: #55575a; margin-bottom: 4px; }
.scroll-thumb { display: block; width: 130px; height: 3px; border-radius: 2px; background: #9b9da1; }

/* quad palette */
.palette {
  position: absolute;
  left: 1122px;
  top: 256px;
  width: 298px;
  height: 264px;
  border-radius: 10px;
  overflow: hidden;
  background: #2d2f33;
  box-shadow: 0 10px 32px rgba(0, 0, 0, .38);
  display: flex;
  flex-direction: column;
}
.pal-head {
  height: 18px;
  flex: none;
  display: flex;
  align-items: center;
  justify-content: space-between;
  padding: 0 4px 0 4px;
  background: #16171a;
  font-size: 11.500px;
  font-weight: 500;
  color: #e0e1e2;
}
.pal-row, .pal-grid {
  display: grid;
  grid-template-columns: repeat(6, 1fr);
  align-items: center;
  justify-items: center;
}
.pal-row { height: 49px; flex: none; }
.pal-grid { flex: 1; grid-auto-rows: 50px; }
.pi { width: 43px; height: 38px; }
.pal-tabs {
  height: 45px;
  flex: none;
  display: grid;
  grid-template-columns: 98px 97px 98px;
  gap: 1.500px;
  padding-left: 1px;
}
.pal-tab {
  background: #101114;
  padding: 2px 5px;
  font-size: 10.500px;
  font-weight: 500;
  color: #d4d5d7;
}
.pal-tab-on { background: #4c4f53; }

/* coordinate icon */
.ucs { position: absolute; left: 0; top: 587px; }
.ucs path { fill: none; }
.ucs-green { stroke: #36c26e; stroke-width: 1.200; }
.ucs-black { stroke: #1e2124; stroke-width: 2.400; }
.ucs-w { stroke: #15171a; stroke-width: 1.200; }
.ucs-side { stroke: #2fc06c; stroke-width: 2.500; }
.ucs-top { stroke: #f4494f; stroke-width: 2.500; }
.ucs-x { stroke: #f2565b; stroke-width: 1.200; }
```
